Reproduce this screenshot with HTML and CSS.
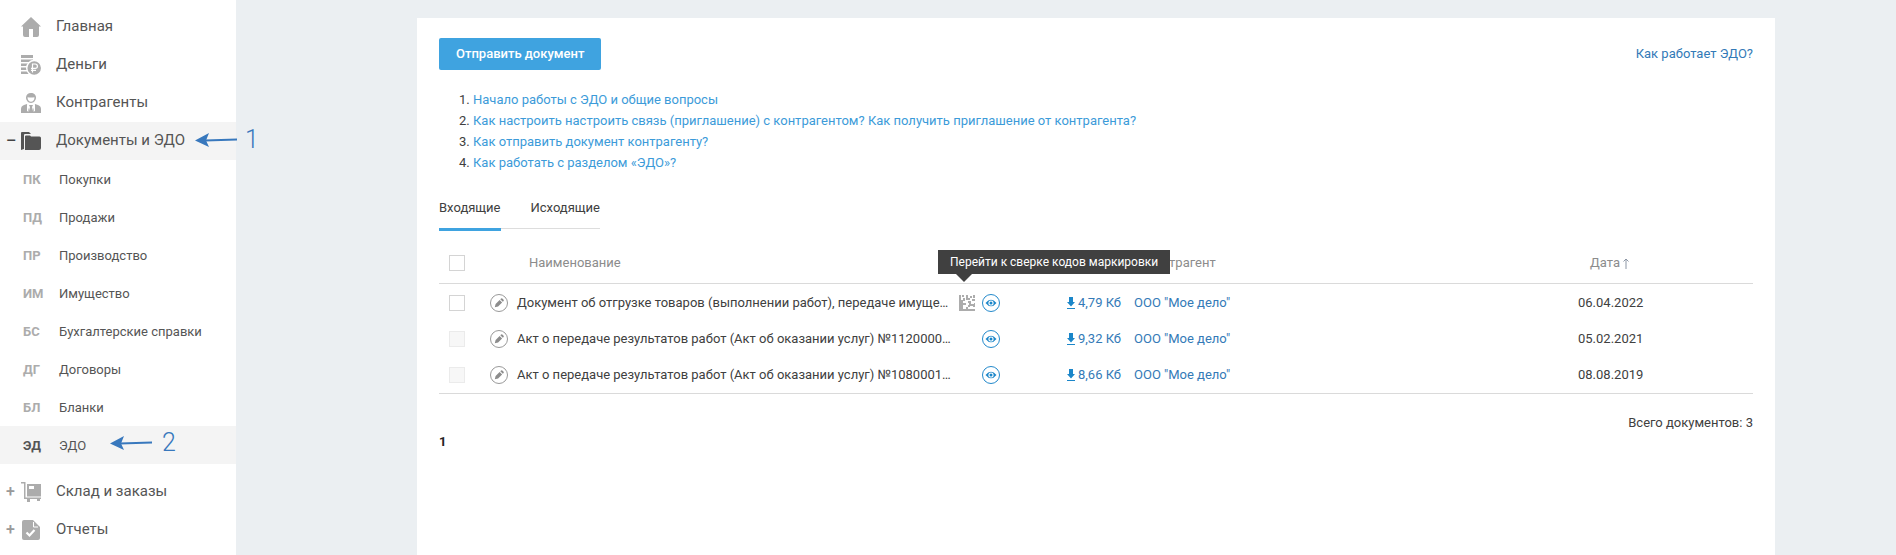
FILE: index.html
```html
<!DOCTYPE html>
<html lang="ru">
<head>
<meta charset="utf-8">
<title>Документы и ЭДО</title>
<link rel="stylesheet" href="styles.css">
</head>
<body>
<svg width="0" height="0" class="sprite" aria-hidden="true">
  <symbol id="pencil" viewBox="0 0 18 18">
    <circle cx="9" cy="9" r="8.5" fill="none" stroke="#999"/>
    <path d="M4.800 13.200l.8-3.300 4-4 2.500 2.500-4 4zM10.300 5.200l.8-.8q.6-.5 1.200 0l1.300 1.300q.5.600 0 1.200l-.8.8z" fill="#8c8c8c"/>
  </symbol>
  <symbol id="eye" viewBox="0 0 18 18">
    <circle cx="9" cy="9" r="8.500" fill="none" stroke="#2389cb"/>
    <path d="M3.500 9Q9 2.300 14.500 9 9 15.700 3.500 9z" fill="#1b86c9"/>
    <circle cx="9" cy="9" r="2.600" fill="#fff"/>
    <circle cx="9" cy="9" r="1.500" fill="#1b86c9"/>
  </symbol>
  <symbol id="download" viewBox="0 0 8 12">
    <path d="M2 0h4v5h2L4 9.500 0 5h2zM0 11h8v1H0z" fill="#1b86c9"/>
  </symbol>
</svg>
<div class="layout">
  <nav class="sidebar">
    <a class="item" href="#"><span class="sign"></span>
      <svg class="icon" viewBox="0 0 20 20"><path d="M10 0l10 9.500h-2V18q0 2-2 2h-4v-8H8v8H4q-2 0-2-2V9.500H0z"/></svg>Главная</a>
    <a class="item" href="#"><span class="sign"></span>
      <svg class="icon" viewBox="0 0 20 20"><path d="M0 0h12v3H0zM0 4.500h12v2.500H0zM0 8.500h8v2.500H0zM0 12.500h8V15H0zM0 16.500h8V19H0z"/><circle cx="13.200" cy="13" r="7.500" stroke="#fff" stroke-width="1.500"/><path d="M11.500 17.500V9h2.700a2.200 2.200 0 0 1 0 4.400H10M10 15.400h5" fill="none" stroke="#fff" stroke-width="1.200"/></svg>Деньги</a>
    <a class="item" href="#"><span class="sign"></span>
      <svg class="icon" viewBox="0 0 20 20"><path fill-rule="evenodd" d="M10 0C13 0 15 2 15 4.500S13 10 10 10 5 7 5 4.500 7 0 10 0zM6.500 4.200C6.500 7 8 8.700 10 8.700s3.500-1.700 3.500-4.500Q10 5 6.500 4.200z"/><path d="M0 20v-4q0-3 3-4l3-1 2 7 1-4-1-2h4l-1 2 1 4 2-7 3 1q3 1 3 4v4z"/><path d="M6.500 11.500V18h1M13.500 11.500V18h-1" fill="none" stroke="#fff"/></svg>Контрагенты</a>
    <a class="item active" href="#"><span class="sign">–</span>
      <svg class="icon" viewBox="0 0 20 20"><path d="M0 19V2q0-1 1-1h7l2 2H4q-1 0-1 1v14zM4 5.500q0-1 1-1h4l1 1h8.500Q20 5.500 20 7v10q0 2-2 2H4z"/></svg>Документы и ЭДО</a>
    <a class="item sub" href="#"><b>ПК</b>Покупки</a>
    <a class="item sub" href="#"><b>ПД</b>Продажи</a>
    <a class="item sub" href="#"><b>ПР</b>Производство</a>
    <a class="item sub" href="#"><b>ИМ</b>Имущество</a>
    <a class="item sub" href="#"><b>БС</b>Бухгалтерские справки</a>
    <a class="item sub" href="#"><b>ДГ</b>Договоры</a>
    <a class="item sub" href="#"><b>БЛ</b>Бланки</a>
    <a class="item sub active last" href="#"><b>ЭД</b>ЭДО</a>
    <a class="item" href="#"><span class="sign">+</span>
      <svg class="icon" viewBox="0 0 20 20"><path d="M0 0h4.500v15.500H20V17h-1v2h-3v-2H9v3H6v-3H3V1.500H0z"/><path fill-rule="evenodd" d="M6 2h14v12.500H6zM8 4v3h5V4z"/></svg>Склад и заказы</a>
    <a class="item" href="#"><span class="sign">+</span>
      <svg class="icon" viewBox="0 0 20 20"><path d="M1 2q0-2 2-2h9l7 7v11q0 2-2 2H3q-2 0-2-2z"/><path d="M12.500 2v5H17" fill="none" stroke="#fff"/><path d="M5.500 12.500l3 3 5-5.500" fill="none" stroke="#fff" stroke-width="2.200"/></svg>Отчеты</a>
  </nav>

  <main class="main">
    <section class="panel">
      <div class="top">
        <button class="send" type="button">Отправить документ</button>
        <a class="link" href="#">Как работает ЭДО?</a>
      </div>
      <ol class="help">
        <li><a href="#">Начало работы с ЭДО и общие вопросы</a></li>
        <li><a href="#">Как настроить настроить связь (приглашение) с контрагентом? Как получить приглашение от контрагента?</a></li>
        <li><a href="#">Как отправить документ контрагенту?</a></li>
        <li><a href="#">Как работать с разделом «ЭДО»?</a></li>
      </ol>
      <div class="tabs">
        <a class="tab current" href="#">Входящие</a>
        <a class="tab" href="#">Исходящие</a>
      </div>
      <table class="docs">
        <colgroup><col class="c-check"><col class="c-edit"><col><col class="c-tools"><col class="c-size"><col><col class="c-date"></colgroup>
        <thead>
          <tr><th class="check"><input type="checkbox" aria-label="Выбрать все"></th><th></th><th>Наименование</th><th></th><th></th><th>Контрагент</th><th>Дата <svg class="sort" viewBox="0 0 6 11"><path d="M3 11V1M.5 3.500L3 1l2.500 2.500" fill="none" stroke="#8c96a5"/></svg></th></tr>
        </thead>
        <tbody>
          <tr>
            <td class="check"><input type="checkbox" aria-label="Выбрать документ"></td>
            <td><button class="round" type="button" aria-label="Изменить"><svg><use href="#pencil"/></svg></button></td>
            <td class="name">Документ об отгрузке товаров (выполнении работ), передаче имуще…</td>
            <td><div class="tools">
              <button class="code" type="button" aria-label="Сверка кодов"><svg viewBox="0 0 16 16"><path d="M0 0h2v5h2V3h2v3H4v2h3v2H4v4h3v-2h2v2h7v2H0zM3 0h2v2H3zM7 0h2v3h2V1h2v2h-2v2H7zM14 0h2v3h-2zM13 4h3v2h-3zM9 6h3v3h3v-1h1v4h-2v-1h-3v1H9v-2h1V8H9z" fill="#acacac"/></svg>
                <span class="tooltip" role="tooltip">Перейти к сверке кодов маркировки</span></button>
              <button class="round" type="button" aria-label="Просмотр"><svg><use href="#eye"/></svg></button></div></td>
            <td><a class="size" href="#"><svg><use href="#download"/></svg>4,79 Кб</a></td>
            <td><a class="link" href="#">ООО "Мое дело"</a></td>
            <td>06.04.2022</td>
          </tr>
          <tr>
            <td class="check"><input type="checkbox" disabled aria-label="Выбрать документ"></td>
            <td><button class="round" type="button" aria-label="Изменить"><svg><use href="#pencil"/></svg></button></td>
            <td class="name">Акт о передаче результатов работ (Акт об оказании услуг) №1120000…</td>
            <td><div class="tools"><button class="round" type="button" aria-label="Просмотр"><svg><use href="#eye"/></svg></button></div></td>
            <td><a class="size" href="#"><svg><use href="#download"/></svg>9,32 Кб</a></td>
            <td><a class="link" href="#">ООО "Мое дело"</a></td>
            <td>05.02.2021</td>
          </tr>
          <tr>
            <td class="check"><input type="checkbox" disabled aria-label="Выбрать документ"></td>
            <td><button class="round" type="button" aria-label="Изменить"><svg><use href="#pencil"/></svg></button></td>
            <td class="name">Акт о передаче результатов работ (Акт об оказании услуг) №1080001…</td>
            <td><div class="tools"><button class="round" type="button" aria-label="Просмотр"><svg><use href="#eye"/></svg></button></div></td>
            <td><a class="size" href="#"><svg><use href="#download"/></svg>8,66 Кб</a></td>
            <td><a class="link" href="#">ООО "Мое дело"</a></td>
            <td>08.08.2019</td>
          </tr>
        </tbody>
      </table>
      <p class="total">Всего документов: 3</p>
      <p class="page">1</p>
    </section>
  </main>
</div>
<div class="note note-one"><svg viewBox="0 0 42 14"><path d="M10 7.500L42 6.500" stroke="#3878bd" stroke-width="2"/><path d="M0 7.500L14 0l-3 7.500L14 14z" fill="#3878bd"/></svg><span>1</span></div>
<div class="note note-two"><svg viewBox="0 0 42 14"><path d="M10 7.500L42 6.500" stroke="#3878bd" stroke-width="2"/><path d="M0 7.500L14 0l-3 7.500L14 14z" fill="#3878bd"/></svg><span>2</span></div>
</body>
</html>
```
FILE: styles.css
```css
* { box-sizing: border-box; }
body {
  margin: 0;
  background: #ebeff2;
  color: #404040;
  font: 13px/20px Roboto, sans-serif;
}
a { text-decoration: none; color: inherit; }
button { padding: 0; border: 0; background: none; font: inherit; cursor: pointer; }
p { margin: 0; }
.sprite { position: absolute; }
.layout { display: flex; min-height: 100vh; }

.sidebar { flex: none; width: 236px; padding-top: 8px; background: #fff; }
.item {
  display: flex;
  align-items: center;
  height: 38px;
  padding: 0 0 2px 6px;
  font-size: 15px;
  color: #555;
}
.sign { width: 15px; padding-top: 2px; font-size: 16px; font-weight: 500; color: #999; }
.icon { width: 20px; height: 20px; margin: 2px 15px 0 0; fill: #acacac; }
.item.active { background: #f4f4f4; }
.item.active .icon { fill: #555; }
.item.active .sign { color: #444; }
.item.sub { padding: 2px 0 0 23px; font-size: 13px; }
.sub b { width: 36px; color: #acacac; }
.sub.active b { color: #555; }
.last { margin-bottom: 9px; }

.main { display: flex; flex: 1; min-width: 0; padding: 18px 121px 0 181px; }
.panel { flex: 1; min-width: 0; padding: 20px 22px; background: #fff; }
.top { display: flex; justify-content: space-between; align-items: center; }
.send {
  height: 32px;
  padding: 0 17px;
  border-radius: 2px;
  background: #3fa3e0;
  color: #fff;
  font-weight: 500;
}
.link { color: #337ab7; }
.help { margin: 19px 0 22px; padding-left: 34px; line-height: 21px; }
.help a { color: #3c9bd9; }

.tabs { display: flex; width: max-content; height: 36px; margin-bottom: 12px; }
.tab { height: 34px; padding: 3px 0 0 30px; border-bottom: 1px solid #ddd; }
.tab.current { height: 36px; padding-left: 0; border-bottom: 3px solid #3fa3e0; }

.docs { width: 100%; table-layout: fixed; border-spacing: 0; border-bottom: 1px solid #dadada; }
.docs th, .docs td { padding: 0; text-align: left; vertical-align: middle; white-space: nowrap; }
.docs td { height: 36px; }
.docs tbody tr:first-child td { height: 37px; }
.docs th { height: 41px; padding-left: 12px; border-bottom: 1px solid #dadada; font-weight: 400; color: #8c8c8c; }
.docs .check { padding-left: 10px; }
.c-check { width: 51px; }
.c-edit { width: 27px; }
.c-tools { width: 106px; }
.c-size { width: 67px; }
.c-date { width: 175px; }
.docs input {
  display: block;
  appearance: none;
  width: 16px;
  height: 16px;
  margin: 0;
  border: 1px solid #d4d4d4;
  background: #fff;
}
.docs input:disabled { border-color: #ebebeb; background: #f7f7f7; }
.round, .round svg { display: block; width: 18px; height: 18px; }
.tools { display: flex; align-items: center; justify-content: flex-end; gap: 7px; padding-right: 67px; }
.code { position: relative; width: 16px; height: 16px; }
.code svg { display: block; width: 16px; height: 16px; }
.tooltip {
  position: absolute;
  left: -21px;
  bottom: 37px;
  height: 24px;
  padding: 0 12px;
  background: #404040;
  color: #fff;
  font-size: 12px;
  line-height: 24px;
}
.tooltip::after {
  content: "";
  position: absolute;
  left: 18px;
  top: 24px;
  border: 8px solid transparent;
  border-top-color: #404040;
  border-bottom: 0;
}
.size { display: flex; align-items: center; gap: 3px; color: #337ab7; }
.size svg { width: 8px; height: 12px; }
.sort { width: 6px; height: 11px; vertical-align: -2px; }
.total { margin-top: 19px; text-align: right; }
.page { line-height: 18px; font-weight: 700; color: #222; }

.note {
  position: absolute;
  display: flex;
  align-items: center;
  gap: 8px;
  height: 28px;
  color: #3878bd;
  font: 300 25px/28px Roboto, sans-serif;
  pointer-events: none;
}
.note svg { width: 42px; height: 14px; }
.note-one { left: 195px; top: 126px; }
.note-two { left: 110px; top: 429px; gap: 10px; }
```
